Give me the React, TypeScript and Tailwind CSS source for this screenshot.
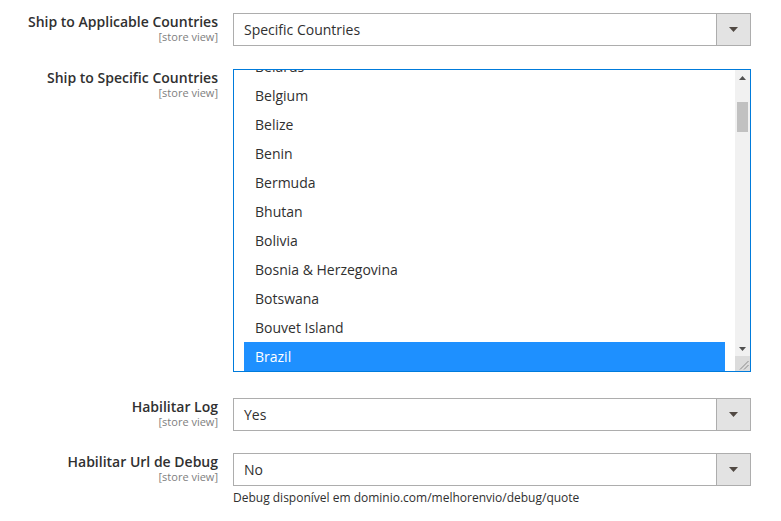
import React from "react";

const font = { fontFamily: '"Open Sans", "Noto Sans", sans-serif' };

function Label({ title }: { title: string }) {
  return (
    <div className="w-[218px] shrink-0 text-right">
      <div className="text-[14px] leading-[17px] font-semibold text-[#303030]">{title}</div>
      <div className="text-[11px] leading-[13px] text-[#808080]">[store view]</div>
    </div>
  );
}

function Select({ value }: { value: string }) {
  return (
    <div className="flex h-[33px] w-[518px] border border-[#adadad] bg-white">
      <div className="flex flex-1 items-center pl-[10px] text-[14px] text-[#303030]">{value}</div>
      <div className="flex w-[34px] items-center justify-center border-l border-[#adadad] bg-[#e3e3e3]">
        <svg width="9" height="5" viewBox="0 0 9 5">
          <polygon points="0,0 9,0 4.5,5" fill="#514943" />
        </svg>
      </div>
    </div>
  );
}

const countries = [
  "Belarus",
  "Belgium",
  "Belize",
  "Benin",
  "Bermuda",
  "Bhutan",
  "Bolivia",
  "Bosnia & Herzegovina",
  "Botswana",
  "Bouvet Island",
  "Brazil",
];

function MultiSelect() {
  return (
    <div className="flex h-[303px] w-[518px] overflow-hidden border border-[#007bdb] bg-white">
      <div className="flex-1 overflow-hidden px-[10px]">
        <div className="mt-[-18px]">
          {countries.map((c) => (
            <div
              key={c}
              className={
                "flex h-[29px] items-center pl-[11px] text-[14px] " +
                (c === "Brazil" ? "bg-[#1e90ff] text-white" : "text-[#303030]")
              }
            >
              {c}
            </div>
          ))}
        </div>
      </div>
      <div className="flex w-[15px] shrink-0 flex-col bg-[#f1f1f1]">
        <div className="flex h-[15px] items-center justify-center">
          <svg width="7" height="4" viewBox="0 0 7 4">
            <polygon points="3.5,0 7,4 0,4" fill="#505050" />
          </svg>
        </div>
        <div className="flex-1">
          <div className="mx-[2px] mt-[17px] h-[30px] bg-[#c1c1c1]" />
        </div>
        <div className="flex h-[15px] items-center justify-center">
          <svg width="7" height="4" viewBox="0 0 7 4">
            <polygon points="0,0 7,0 3.5,4" fill="#505050" />
          </svg>
        </div>
        <div className="h-[15px] bg-[#dcdcdc]">
          <svg width="15" height="15" viewBox="0 0 15 15">
            <line x1="13.5" y1="5" x2="5" y2="13.5" stroke="#8a8a8a" strokeWidth="1" />
            <line x1="13.5" y1="9" x2="9" y2="13.5" stroke="#8a8a8a" strokeWidth="1" />
          </svg>
        </div>
      </div>
    </div>
  );
}

export default function App() {
  return (
    <div className="h-[521px] w-[781px] bg-white pt-[13px]" style={font}>
      <div className="flex">
        <Label title="Ship to Applicable Countries" />
        <div className="ml-[15px]">
          <Select value="Specific Countries" />
        </div>
      </div>
      <div className="mt-[23px] flex">
        <Label title="Ship to Specific Countries" />
        <div className="ml-[15px]">
          <MultiSelect />
        </div>
      </div>
      <div className="mt-[26px] flex">
        <Label title="Habilitar Log" />
        <div className="ml-[15px]">
          <Select value="Yes" />
        </div>
      </div>
      <div className="mt-[22px] flex">
        <Label title="Habilitar Url de Debug" />
        <div className="ml-[15px]">
          <Select value="No" />
          <div className="mt-[4px] text-[12px] leading-[16px] text-[#303030]">
            Debug disponível em dominio.com/melhorenvio/debug/quote
          </div>
        </div>
      </div>
    </div>
  );
}
